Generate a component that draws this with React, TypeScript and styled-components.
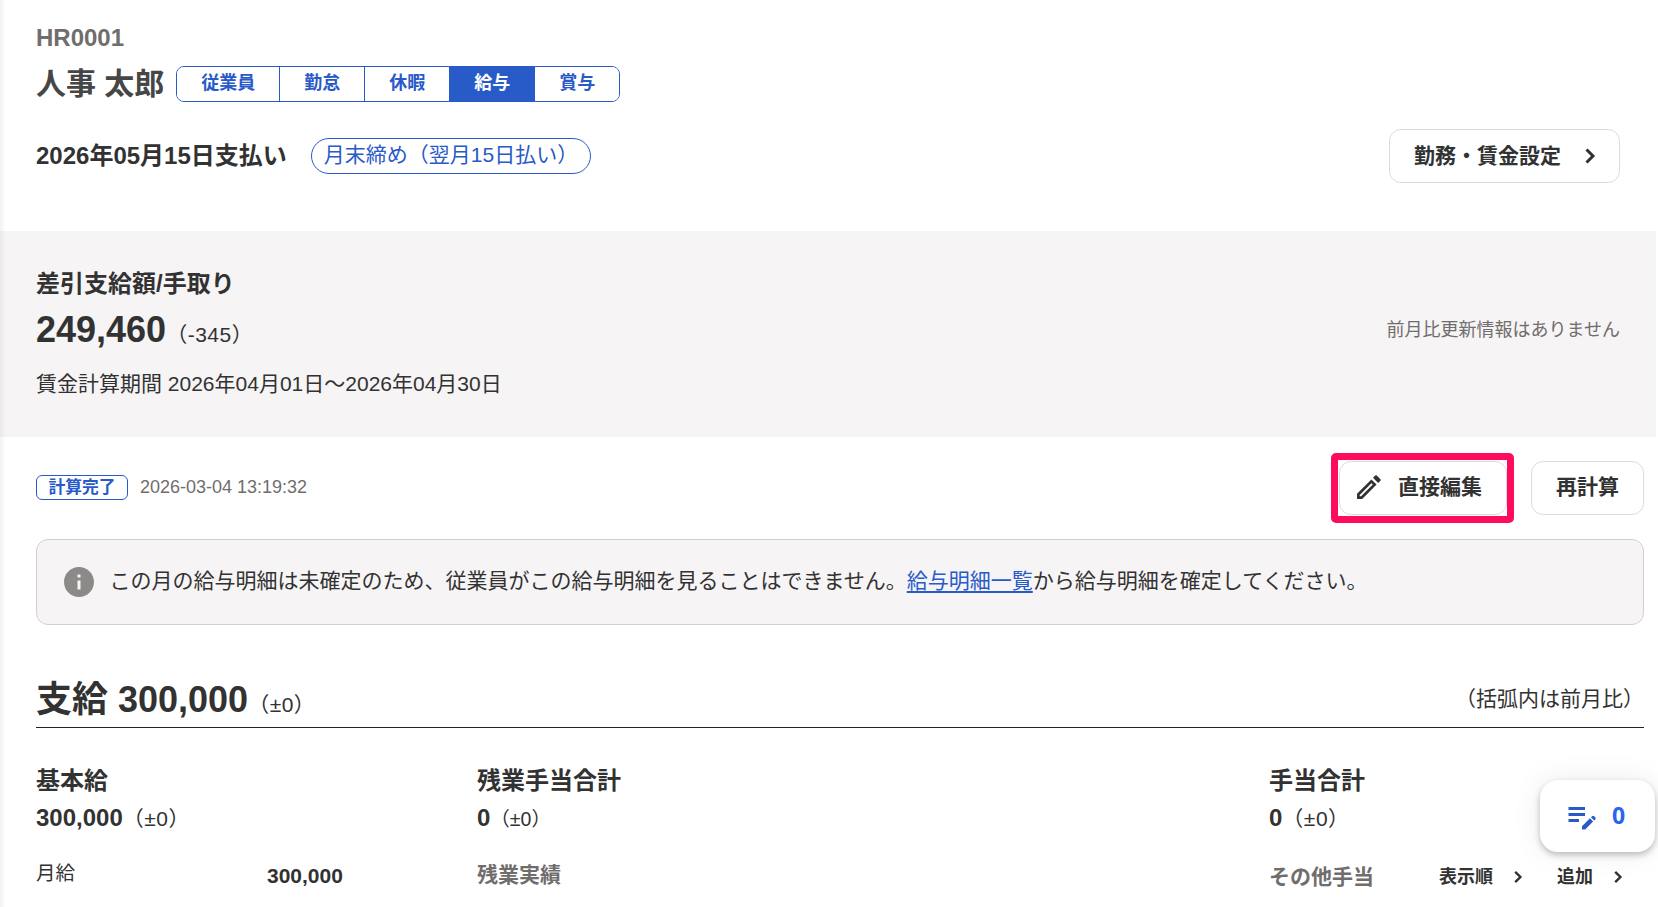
import React from "react";
import styled, { createGlobalStyle } from "styled-components";
import { MdEditNote, MdInfo } from "react-icons/md";

const ink = "#323232";
const gray = "#706d6d";
const blue = "#285ac8";
const line = "#dcdcdc";
const surface = "#f6f4f5";

const GlobalStyle = createGlobalStyle`
  *, *::before, *::after { box-sizing: border-box; }
  html, body { margin: 0; background: #fff; overflow: hidden; }
  body {
    color: ${ink};
    font-family: "Liberation Sans", "Noto Sans CJK JP", sans-serif;
    font-size: 21px;
  }
`;

const Page = styled.div`
  position: relative;
  height: 907px;
  overflow: hidden;
  padding-right: 2px;
  &::before {
    content: "";
    position: absolute;
    inset: 0 auto 0 0;
    width: 6px;
    background: linear-gradient(to right, rgba(0, 0, 0, 0.05), transparent);
  }
`;

const Header = styled.header`
  height: 231px;
  padding: 23px 36px 48px;
`;

const StaffCode = styled.div`
  font-size: 24px;
  font-weight: 700;
  line-height: 30px;
  color: ${gray};
`;

const NameRow = styled.div`
  display: flex;
  align-items: center;
  gap: 12px;
  height: 36px;
  margin-top: 13px;
`;

const Name = styled.h1`
  margin: 0;
  font-size: 30px;
  line-height: 36px;
  color: #464646;
`;

const Tabs = styled.nav`
  display: flex;
  height: 36px;
  border: 1px solid ${blue};
  border-radius: 8px;
  overflow: hidden;
`;

const Tab = styled.a<{ $active?: boolean }>`
  padding: 0 24px;
  font-size: 18px;
  font-weight: 700;
  line-height: 32px;
  color: ${(p) => (p.$active ? "#fff" : blue)};
  background: ${(p) => (p.$active ? blue : "#fff")};
  & + & { border-left: 1px solid ${blue}; }
`;

const PayRow = styled.div`
  display: flex;
  align-items: center;
  height: 54px;
  margin-top: 27px;
`;

const PayDate = styled.h2`
  margin: 0 24px 0 0;
  font-size: 24px;
  line-height: 36px;
`;

const ClosingPill = styled.span`
  height: 36px;
  padding: 0 12px;
  border: 1px solid ${blue};
  border-radius: 18px;
  line-height: 32px;
  color: ${blue};
`;

const Button = styled.button`
  display: flex;
  align-items: center;
  height: 54px;
  padding: 0 24px;
  border: 1px solid ${line};
  border-radius: 12px;
  background: #fff;
  color: ${ink};
  font: 700 21px/52px "Liberation Sans", "Noto Sans CJK JP", sans-serif;
`;

const SettingsButton = styled(Button)`
  margin-left: auto;
  gap: 14px;
  padding-right: 14px;
`;

const Summary = styled.section`
  height: 206px;
  padding: 38px 36px 0;
  background: ${surface};
`;

const SummaryTitle = styled.h3`
  margin: 0 0 10px;
  font-size: 24px;
  line-height: 30px;
`;

const AmountRow = styled.div`
  display: flex;
  justify-content: space-between;
  height: 44px;
  line-height: 42px;
`;

const BigAmount = styled.strong`
  font-size: 36px;
`;

const Muted = styled.span`
  font-size: 18px;
  line-height: 28px;
  color: ${gray};
`;

const ChangeNote = styled(Muted)`
  padding-top: 7px;
`;

const Period = styled.p`
  margin: 16px 0 0;
  line-height: 30px;
`;

const Body = styled.main`
  padding: 24px 12px 0 36px;
`;

const StatusRow = styled.div`
  display: flex;
  align-items: center;
  height: 54px;
`;

const StatusBadge = styled.span`
  height: 25px;
  margin: 0 12px 1px 0;
  padding: 0 11.4px;
  border: 1px solid ${blue};
  border-radius: 6px;
  font-size: 16.8px;
  font-weight: 700;
  line-height: 23px;
  color: ${blue};
`;

const Timestamp = styled(Muted)`
  padding-bottom: 2px;
`;

const ActionButton = styled(Button)`
  padding-bottom: 2px;
  line-height: 50px;
`;

const EditButton = styled(ActionButton)`
  position: relative;
  margin-left: auto;
  gap: 17px;
  padding-left: 17px;
  &::after {
    content: "";
    position: absolute;
    inset: -9px -8px -9px -9px;
    border: 7px solid #ff0b5c;
    border-radius: 5px;
  }
`;

const RecalcButton = styled(ActionButton)`
  margin-left: 24px;
`;

const Notice = styled.div`
  display: flex;
  align-items: center;
  height: 86px;
  margin-top: 24px;
  padding-left: 24px;
  border: 1px solid #d2d0d0;
  border-radius: 12px;
  background: ${surface};
  line-height: 82px;
  svg { color: #8c8989; margin-right: 12.4px; }
`;

const NoticeText = styled.span`
  height: 84px;
`;

const NoticeLink = styled.a`
  color: ${blue};
  text-decoration: underline;
  text-decoration-thickness: 2px;
  text-underline-offset: 3px;
`;

const SectionHead = styled.div`
  display: flex;
  justify-content: space-between;
  height: 51px;
  margin-top: 52px;
  border-bottom: 1px solid #202424;
  line-height: 45px;
`;

const SectionTitle = styled.h2`
  margin: 0;
  font-size: 36px;
`;

const SectionNote = styled.span`
  line-height: 43px;
`;

const Diff = styled.span<{ $small?: boolean }>`
  font-size: ${(p) => (p.$small ? "19.5px" : "21px")};
  font-weight: 400;
  letter-spacing: ${(p) => (p.$small ? "0" : "0.5px")};
`;

const Columns = styled.div`
  display: grid;
  grid-template-columns: 441px 792px 1fr;
  padding-top: 38px;
`;

const ColumnTitle = styled.h3`
  margin: 0;
  font-size: 24px;
  line-height: 30px;
`;

const ColumnAmount = styled.div`
  margin: 7px 0 26px;
  font-size: 24px;
  line-height: 30px;
`;

const ItemRow = styled.div`
  display: flex;
  align-items: center;
  line-height: 32px;
`;

const ItemLabel = styled.span`
  width: 231px;
  margin-bottom: 6px;
  font-size: 19.5px;
  line-height: 26px;
`;

const SubHeading = styled.h4`
  margin: 0;
  font-size: 21px;
  line-height: 30px;
  color: ${gray};
`;

const AllowanceRow = styled.div`
  display: flex;
  align-items: center;
  height: 34px;
`;

const AllowanceHeading = styled(SubHeading)`
  width: 170px;
`;

const TextButton = styled.button`
  display: flex;
  align-items: center;
  gap: 13px;
  padding: 0;
  margin-right: 27px;
  border: 0;
  background: none;
  color: ${ink};
  font: 700 18px/30px "Liberation Sans", "Noto Sans CJK JP", sans-serif;
  white-space: nowrap;
  & + & { margin-right: 0; }
`;

const MemoCard = styled.aside`
  position: absolute;
  left: 1540px;
  top: 780px;
  display: flex;
  align-items: center;
  gap: 12px;
  width: 115px;
  height: 72px;
  padding-left: 24px;
  border-radius: 18px;
  background: #fff;
  box-shadow: 0 3px 6px rgba(0, 0, 0, 0.24), 0 0 30px rgba(0, 0, 0, 0.08);
  color: ${blue};
`;

const MemoCount = styled.span`
  font: 700 23px/70px "Open Sans", sans-serif;
  height: 72px;
  color: #2864f0;
`;

const ChevronSvg = styled.svg`
  flex: none;
  fill: none;
  stroke: currentColor;
  stroke-width: 2.4;
`;

const Chevron = ({ size }: { size: number }) => (
  <ChevronSvg width={size} height={size} viewBox="0 0 24 24">
    <path d="M9.2 6.8L14.4 12L9.2 17.2" />
  </ChevronSvg>
);

const PencilIcon = () => (
  <svg width="24" height="24" viewBox="0 0 24 24" fill="currentColor">
    <path
      fillRule="evenodd"
      d="M0 24V18.8L14.4 4.4L19.6 9.6L5.2 24ZM2.7 21.3H4.1L15.8 9.6L14.4 8.2L2.7 19.9Z"
    />
    <path d="M16 2.8L18.2 0.6Q19 -0.1 19.8 0.6L23.4 4.2Q24.1 5 23.4 5.8L21.2 8Z" />
  </svg>
);

const tabs = ["従業員", "勤怠", "休暇", "給与", "賞与"];

export default function App() {
  return (
    <Page>
      <GlobalStyle />
      <Header>
        <StaffCode>HR0001</StaffCode>
        <NameRow>
          <Name>人事 太郎</Name>
          <Tabs>
            {tabs.map((label) => (
              <Tab key={label} $active={label === "給与"}>{label}</Tab>
            ))}
          </Tabs>
        </NameRow>
        <PayRow>
          <PayDate>2026年05月15日支払い</PayDate>
          <ClosingPill>月末締め（翌月15日払い）</ClosingPill>
          <SettingsButton>
            勤務・賃金設定
            <Chevron size={30} />
          </SettingsButton>
        </PayRow>
      </Header>

      <Summary>
        <SummaryTitle>差引支給額/手取り</SummaryTitle>
        <AmountRow>
          <div>
            <BigAmount>249,460</BigAmount>
            <Diff>（-345）</Diff>
          </div>
          <ChangeNote>前月比更新情報はありません</ChangeNote>
        </AmountRow>
        <Period>賃金計算期間 2026年04月01日〜2026年04月30日</Period>
      </Summary>

      <Body>
        <StatusRow>
          <StatusBadge>計算完了</StatusBadge>
          <Timestamp>2026-03-04 13:19:32</Timestamp>
          <EditButton>
            <PencilIcon />
            直接編集
          </EditButton>
          <RecalcButton>再計算</RecalcButton>
        </StatusRow>

        <Notice>
          <MdInfo size={36} />
          <NoticeText>
            この月の給与明細は未確定のため、従業員がこの給与明細を見ることはできません。<NoticeLink>給与明細一覧</NoticeLink>から給与明細を確定してください。
          </NoticeText>
        </Notice>

        <SectionHead>
          <SectionTitle>
            支給 300,000<Diff>（±0）</Diff>
          </SectionTitle>
          <SectionNote>（括弧内は前月比）</SectionNote>
        </SectionHead>

        <Columns>
          <section>
            <ColumnTitle>基本給</ColumnTitle>
            <ColumnAmount><b>300,000</b><Diff>（±0）</Diff></ColumnAmount>
            <ItemRow>
              <ItemLabel>月給</ItemLabel>
              <b>300,000</b>
            </ItemRow>
          </section>
          <section>
            <ColumnTitle>残業手当合計</ColumnTitle>
            <ColumnAmount><b>0</b><Diff $small>（±0）</Diff></ColumnAmount>
            <SubHeading>残業実績</SubHeading>
          </section>
          <section>
            <ColumnTitle>手当合計</ColumnTitle>
            <ColumnAmount><b>0</b><Diff>（±0）</Diff></ColumnAmount>
            <AllowanceRow>
              <AllowanceHeading>その他手当</AllowanceHeading>
              <TextButton>表示順<Chevron size={24} /></TextButton>
              <TextButton>追加<Chevron size={24} /></TextButton>
            </AllowanceRow>
          </section>
        </Columns>
      </Body>

      <MemoCard>
        <MdEditNote size={36} />
        <MemoCount>0</MemoCount>
      </MemoCard>
    </Page>
  );
}
